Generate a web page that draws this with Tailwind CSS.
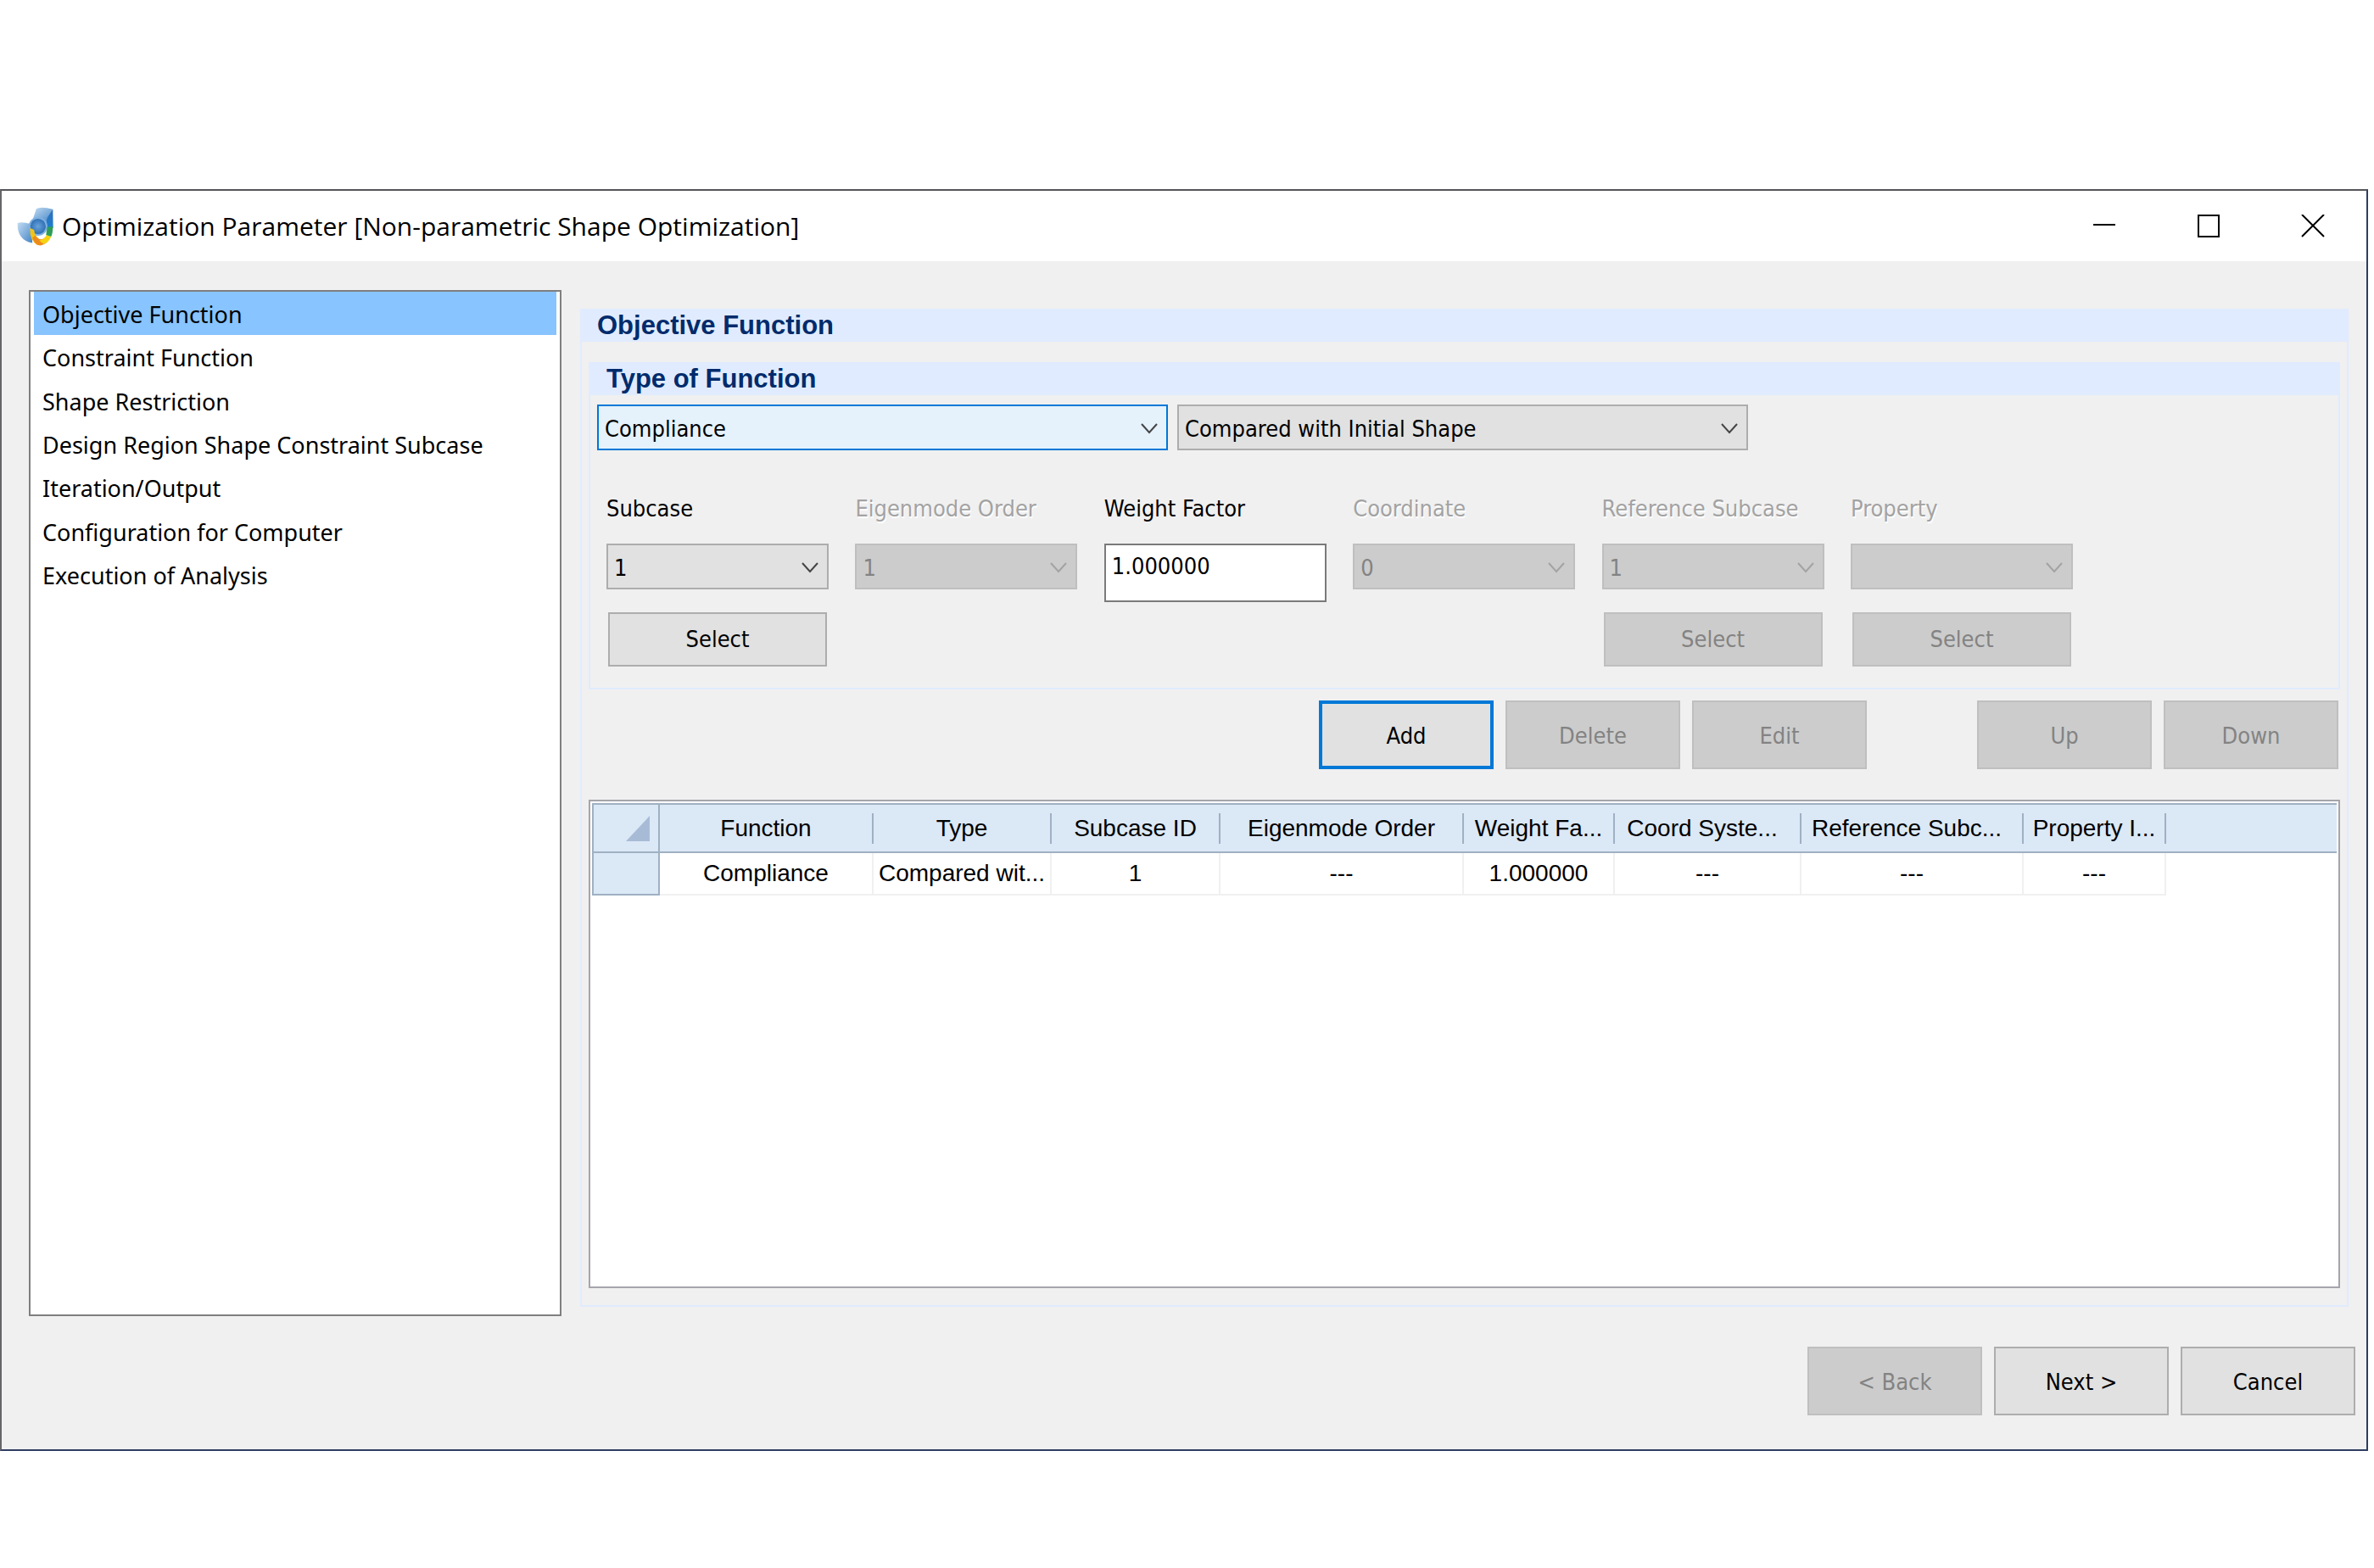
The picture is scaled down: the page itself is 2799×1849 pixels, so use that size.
<!DOCTYPE html>
<html lang="en">
<head>
  <meta charset="UTF-8">
  <meta name="viewport" content="width=device-width, initial-scale=1.0">
  <title>Optimization Parameter</title>
  <script src="https://cdn.jsdelivr.net/npm/@tailwindcss/browser@4"></script>
</head>
<body class="bg-white text-black text-[27px] leading-8 font-['DejaVu_Sans_Condensed','DejaVu_Sans',sans-serif]">

  <div class="min-h-screen flex flex-col pt-[223px] pb-[138px] pr-[7px]">
    <div class="flex-1 flex flex-col bg-[#f0f0f0] border-2 border-t-[#55555a] border-l-[#66666a] border-r-[#2f3c62] border-b-[#2f3c62]">

      <!-- Title bar -->
      <header class="h-[83px] bg-white flex items-center">
        <svg class="w-[43px] h-[46px] ml-[18px]" viewBox="62 98 128 136" aria-hidden="true">
          <defs>
            <linearGradient id="blueTop" x1="0" y1="0" x2="1" y2="1">
              <stop offset="0" stop-color="#c3dcf2" />
              <stop offset="1" stop-color="#4485c6" />
            </linearGradient>
            <linearGradient id="blueSide" x1="0" y1="0" x2="0" y2="1">
              <stop offset="0" stop-color="#2f6fb8" />
              <stop offset="1" stop-color="#1d7fd0" />
            </linearGradient>
            <radialGradient id="hub">
              <stop offset="0" stop-color="#6aa3da" />
              <stop offset="1" stop-color="#2f70b5" />
            </radialGradient>
          </defs>
          <path d="M118 140 L130 104 Q146 94 188 106 L174 150 L140 150 Z" fill="url(#blueTop)" />
          <path d="M188 106 L189 172 L160 176 L168 136 Z" fill="url(#blueSide)" />
          <path d="M64 154 Q78 148 112 158 L116 224 Q62 214 64 154 Z" fill="url(#blueTop)" />
          <circle cx="136" cy="166" r="33" fill="#7fb0e0" />
          <circle cx="136" cy="166" r="27" fill="url(#hub)" />
          <path d="M108 172 Q106 216 134 232 L146 214 Q124 202 122 178 Z" fill="#f0c419" />
          <path d="M116 206 Q126 232 144 233 Q160 230 170 218 L160 208 Q138 218 126 198 Z" fill="#ee8a1d" />
          <path d="M140 216 Q158 212 166 196 L182 202 Q174 222 156 228 Z" fill="#f6d312" />
          <path d="M168 168 L188 166 Q188 190 182 202 L164 196 Z" fill="#2e9e57" />
        </svg>
        <h1 class="flex-1 ml-[10px] text-[30px] leading-10 font-['Open_Sans','Noto_Sans',sans-serif]">Optimization Parameter [Non-parametric Shape Optimization]</h1>
        <div class="flex self-stretch pr-0.5">
          <button type="button" aria-label="Minimize" class="w-[123px] flex items-center justify-center">
            <svg class="w-[28px] h-[28px]" viewBox="0 0 28 28"><path d="M1 12h26" stroke="#000" stroke-width="2" /></svg>
          </button>
          <button type="button" aria-label="Maximize" class="w-[123px] flex items-center justify-center">
            <svg class="w-[28px] h-[28px]" viewBox="0 0 28 28"><rect x="2" y="1" width="24" height="25" fill="none" stroke="#000" stroke-width="2" /></svg>
          </button>
          <button type="button" aria-label="Close" class="w-[123px] flex items-center justify-center">
            <svg class="w-[28px] h-[28px]" viewBox="0 0 28 28"><path d="M1 0l26 26M27 0L1 26" stroke="#000" stroke-width="2" /></svg>
          </button>
        </div>
      </header>

      <main class="flex-1 flex gap-[22px] pt-[34px] pl-8 pr-[21px]">

        <!-- Step list -->
        <nav class="w-[628px] shrink-0 bg-white border-2 border-[#7f7f7f] px-1 font-['Noto_Sans','Open_Sans',sans-serif]">
          <ul class="grid grid-rows-7 h-[360px]">
            <li><a href="#" aria-current="page" class="flex items-center h-full pl-[10px] pt-0.5 bg-[#88c4ff]">Objective Function</a></li>
            <li><a href="#" class="flex items-center h-full pl-[10px] pt-0.5">Constraint Function</a></li>
            <li><a href="#" class="flex items-center h-full pl-[10px] pt-0.5">Shape Restriction</a></li>
            <li><a href="#" class="flex items-center h-full pl-[10px] pt-0.5">Design Region Shape Constraint Subcase</a></li>
            <li><a href="#" class="flex items-center h-full pl-[10px] pt-0.5">Iteration/Output</a></li>
            <li><a href="#" class="flex items-center h-full pl-[10px] pt-0.5">Configuration for Computer</a></li>
            <li><a href="#" class="flex items-center h-full pl-[10px] pt-0.5">Execution of Analysis</a></li>
          </ul>
        </nav>

        <!-- Objective function -->
        <section class="flex-1 min-w-0 flex flex-col mt-[22px] mb-[11px] border-2 border-[#e0ebff]">
          <h2 class="h-[37px] pl-[18px] bg-[#e0ebff] text-[#002b6b] text-[31px] leading-9 font-bold font-['Liberation_Sans',Arial,sans-serif]">Objective Function</h2>
          <div class="flex-1 flex flex-col pt-6 px-2 pb-5">

            <section class="border-2 border-[#e0ebff]">
              <h3 class="h-[37px] pl-[19px] bg-[#e0ebff] text-[#002b6b] text-[31px] leading-9 font-bold font-['Liberation_Sans',Arial,sans-serif]">Type of Function</h3>

              <div class="flex gap-[11px] pt-[11px] pl-2">
                <div class="relative w-[673px]">
                  <select aria-label="Function" class="appearance-none w-full h-[54px] pl-[7px] pt-1 border-2 border-[#0078d7] bg-[#e5f1fb]">
                    <option>Compliance</option>
                  </select>
                  <svg class="absolute right-3 top-[22px] w-5 h-[13px] pointer-events-none" viewBox="0 0 20 13"><path d="M1 1l9 10 9-10" fill="none" stroke="#444" stroke-width="2" /></svg>
                </div>
                <div class="relative w-[673px]">
                  <select aria-label="Comparison" class="appearance-none w-full h-[54px] pl-[7px] pt-1 border-2 border-[#adadad] bg-[#e1e1e1]">
                    <option>Compared with Initial Shape</option>
                  </select>
                  <svg class="absolute right-3 top-[22px] w-5 h-[13px] pointer-events-none" viewBox="0 0 20 13"><path d="M1 1l9 10 9-10" fill="none" stroke="#444" stroke-width="2" /></svg>
                </div>
              </div>

              <div class="flex justify-between w-full max-w-[1748px] pt-[53px] pl-[19px] pb-[25px]">
                <div class="w-[262px] flex flex-col">
                  <label for="subcase">Subcase</label>
                  <div class="relative mt-[25px]">
                    <select id="subcase" class="appearance-none w-full h-[54px] pl-[7px] pt-1 border-2 border-[#adadad] bg-[#e1e1e1]">
                      <option>1</option>
                    </select>
                    <svg class="absolute right-3 top-[22px] w-5 h-[13px] pointer-events-none" viewBox="0 0 20 13"><path d="M1 1l9 10 9-10" fill="none" stroke="#444" stroke-width="2" /></svg>
                  </div>
                  <button type="button" class="h-16 mt-[27px] mx-0.5 border-2 border-[#adadad] bg-[#e1e1e1]">Select</button>
                </div>
                <div class="w-[262px] flex flex-col">
                  <label for="eigenmode" class="text-[#a3a3a3] [text-shadow:1px_2px_0_#fff]">Eigenmode Order</label>
                  <div class="relative mt-[25px]">
                    <select id="eigenmode" disabled class="appearance-none w-full h-[54px] pl-[7px] pt-1 border-2 border-[#bfbfbf] bg-[#cccccc] text-[#838383] opacity-100">
                      <option>1</option>
                    </select>
                    <svg class="absolute right-3 top-[22px] w-5 h-[13px] pointer-events-none" viewBox="0 0 20 13"><path d="M1 1l9 10 9-10" fill="none" stroke="#a3a3a3" stroke-width="2" /></svg>
                  </div>
                </div>
                <div class="w-[262px] flex flex-col">
                  <label for="weight">Weight Factor</label>
                  <input id="weight" type="text" value="1.000000" class="w-full h-[69px] mt-[25px] pl-[7px] pb-4 border-2 border-[#7a7a7a] bg-white">
                </div>
                <div class="w-[262px] flex flex-col">
                  <label for="coordinate" class="text-[#a3a3a3] [text-shadow:1px_2px_0_#fff]">Coordinate</label>
                  <div class="relative mt-[25px]">
                    <select id="coordinate" disabled class="appearance-none w-full h-[54px] pl-[7px] pt-1 border-2 border-[#bfbfbf] bg-[#cccccc] text-[#838383] opacity-100">
                      <option>0</option>
                    </select>
                    <svg class="absolute right-3 top-[22px] w-5 h-[13px] pointer-events-none" viewBox="0 0 20 13"><path d="M1 1l9 10 9-10" fill="none" stroke="#a3a3a3" stroke-width="2" /></svg>
                  </div>
                </div>
                <div class="w-[262px] flex flex-col">
                  <label for="reference" class="text-[#a3a3a3] [text-shadow:1px_2px_0_#fff]">Reference Subcase</label>
                  <div class="relative mt-[25px]">
                    <select id="reference" disabled class="appearance-none w-full h-[54px] pl-[7px] pt-1 border-2 border-[#bfbfbf] bg-[#cccccc] text-[#838383] opacity-100">
                      <option>1</option>
                    </select>
                    <svg class="absolute right-3 top-[22px] w-5 h-[13px] pointer-events-none" viewBox="0 0 20 13"><path d="M1 1l9 10 9-10" fill="none" stroke="#a3a3a3" stroke-width="2" /></svg>
                  </div>
                  <button type="button" disabled class="h-16 mt-[27px] mx-0.5 border-2 border-[#bfbfbf] bg-[#cccccc] text-[#838383]">Select</button>
                </div>
                <div class="w-[262px] flex flex-col">
                  <label for="property" class="text-[#a3a3a3] [text-shadow:1px_2px_0_#fff]">Property</label>
                  <div class="relative mt-[25px]">
                    <select id="property" disabled class="appearance-none w-full h-[54px] pl-[7px] pt-1 border-2 border-[#bfbfbf] bg-[#cccccc] text-[#838383] opacity-100">
                      <option></option>
                    </select>
                    <svg class="absolute right-3 top-[22px] w-5 h-[13px] pointer-events-none" viewBox="0 0 20 13"><path d="M1 1l9 10 9-10" fill="none" stroke="#a3a3a3" stroke-width="2" /></svg>
                  </div>
                  <button type="button" disabled class="h-16 mt-[27px] mx-0.5 border-2 border-[#bfbfbf] bg-[#cccccc] text-[#838383]">Select</button>
                </div>
              </div>
            </section>

            <!-- Row actions -->
            <div class="flex justify-end gap-[14px] mt-[13px] pr-0.5">
              <button type="button" class="w-[206px] h-[81px] pt-0.5 border-4 border-[#0078d7] bg-[#e1e1e1]">Add</button>
              <button type="button" disabled class="w-[206px] h-[81px] pt-0.5 border-2 border-[#bfbfbf] bg-[#cccccc] text-[#838383]">Delete</button>
              <button type="button" disabled class="w-[206px] h-[81px] pt-0.5 mr-[116px] border-2 border-[#bfbfbf] bg-[#cccccc] text-[#838383]">Edit</button>
              <button type="button" disabled class="w-[206px] h-[81px] pt-0.5 border-2 border-[#bfbfbf] bg-[#cccccc] text-[#838383]">Up</button>
              <button type="button" disabled class="w-[206px] h-[81px] pt-0.5 border-2 border-[#bfbfbf] bg-[#cccccc] text-[#838383]">Down</button>
            </div>

            <!-- Function table -->
            <div class="flex-1 mt-9 p-0.5 bg-white border-2 border-[#a5a5ab]">
              <table class="w-full table-fixed border-separate border-spacing-0 text-center text-[28px] leading-9 font-['Liberation_Sans',Arial,sans-serif]">
                <colgroup>
                  <col class="w-[80px]">
                  <col class="w-[252px]">
                  <col class="w-[210px]">
                  <col class="w-[199px]">
                  <col class="w-[287px]">
                  <col class="w-[178px]">
                  <col class="w-[220px]">
                  <col class="w-[262px]">
                  <col class="w-[168px]">
                  <col>
                </colgroup>
                <thead>
                  <tr class="h-[59px] bg-[#dbe8f6] whitespace-nowrap">
                    <th class="p-0 border-2 border-[#9fb1c2]">
                      <svg class="w-7 h-[30px] ml-auto mr-[10px]" viewBox="0 0 28 30" aria-label="Select all"><path d="M28 0v30H0z" fill="#a8bbd6" /></svg>
                    </th>
                    <th class="p-0 font-normal border-y-2 border-[#9fb1c2]"><div class="h-9 border-r-2 border-[#9fb1c2]">Function</div></th>
                    <th class="p-0 font-normal border-y-2 border-[#9fb1c2]"><div class="h-9 border-r-2 border-[#9fb1c2]">Type</div></th>
                    <th class="p-0 font-normal border-y-2 border-[#9fb1c2]"><div class="h-9 border-r-2 border-[#9fb1c2]">Subcase ID</div></th>
                    <th class="p-0 font-normal border-y-2 border-[#9fb1c2]"><div class="h-9 border-r-2 border-[#9fb1c2]">Eigenmode Order</div></th>
                    <th class="p-0 font-normal border-y-2 border-[#9fb1c2]"><div class="h-9 border-r-2 border-[#9fb1c2]">Weight Fa...</div></th>
                    <th class="p-0 font-normal border-y-2 border-[#9fb1c2]"><div class="h-9 pr-3 border-r-2 border-[#9fb1c2]">Coord Syste...</div></th>
                    <th class="p-0 font-normal border-y-2 border-[#9fb1c2]"><div class="h-9 pr-3 border-r-2 border-[#9fb1c2]">Reference Subc...</div></th>
                    <th class="p-0 font-normal border-y-2 border-[#9fb1c2]"><div class="h-9 border-r-2 border-[#9fb1c2]">Property I...</div></th>
                    <th class="p-0 border-y-2 border-[#9fb1c2]"></th>
                  </tr>
                </thead>
                <tbody>
                  <tr class="h-[50px] whitespace-nowrap">
                    <th class="p-0 bg-[#dbe8f6] border-2 border-t-0 border-[#9fb1c2]"></th>
                    <td class="p-0 border-r-2 border-b-2 border-[#f0f0f0]">Compliance</td>
                    <td class="p-0 border-r-2 border-b-2 border-[#f0f0f0]">Compared wit...</td>
                    <td class="p-0 border-r-2 border-b-2 border-[#f0f0f0]">1</td>
                    <td class="p-0 border-r-2 border-b-2 border-[#f0f0f0]">---</td>
                    <td class="p-0 border-r-2 border-b-2 border-[#f0f0f0]">1.000000</td>
                    <td class="p-0 border-r-2 border-b-2 border-[#f0f0f0]">---</td>
                    <td class="p-0 border-r-2 border-b-2 border-[#f0f0f0]">---</td>
                    <td class="p-0 border-r-2 border-b-2 border-[#f0f0f0]">---</td>
                    <td class="p-0"></td>
                  </tr>
                </tbody>
              </table>
            </div>
          </div>
        </section>
      </main>

      <!-- Wizard buttons -->
      <footer class="flex justify-end gap-[14px] pt-9 pr-[13px] pb-10">
        <button type="button" disabled class="w-[206px] h-[81px] pt-0.5 border-2 border-[#bfbfbf] bg-[#cccccc] text-[#838383]">&lt; Back</button>
        <button type="button" class="w-[206px] h-[81px] pt-0.5 border-2 border-[#adadad] bg-[#e1e1e1]">Next &gt;</button>
        <button type="button" class="w-[206px] h-[81px] pt-0.5 border-2 border-[#adadad] bg-[#e1e1e1]">Cancel</button>
      </footer>
    </div>
  </div>

</body>
</html>
